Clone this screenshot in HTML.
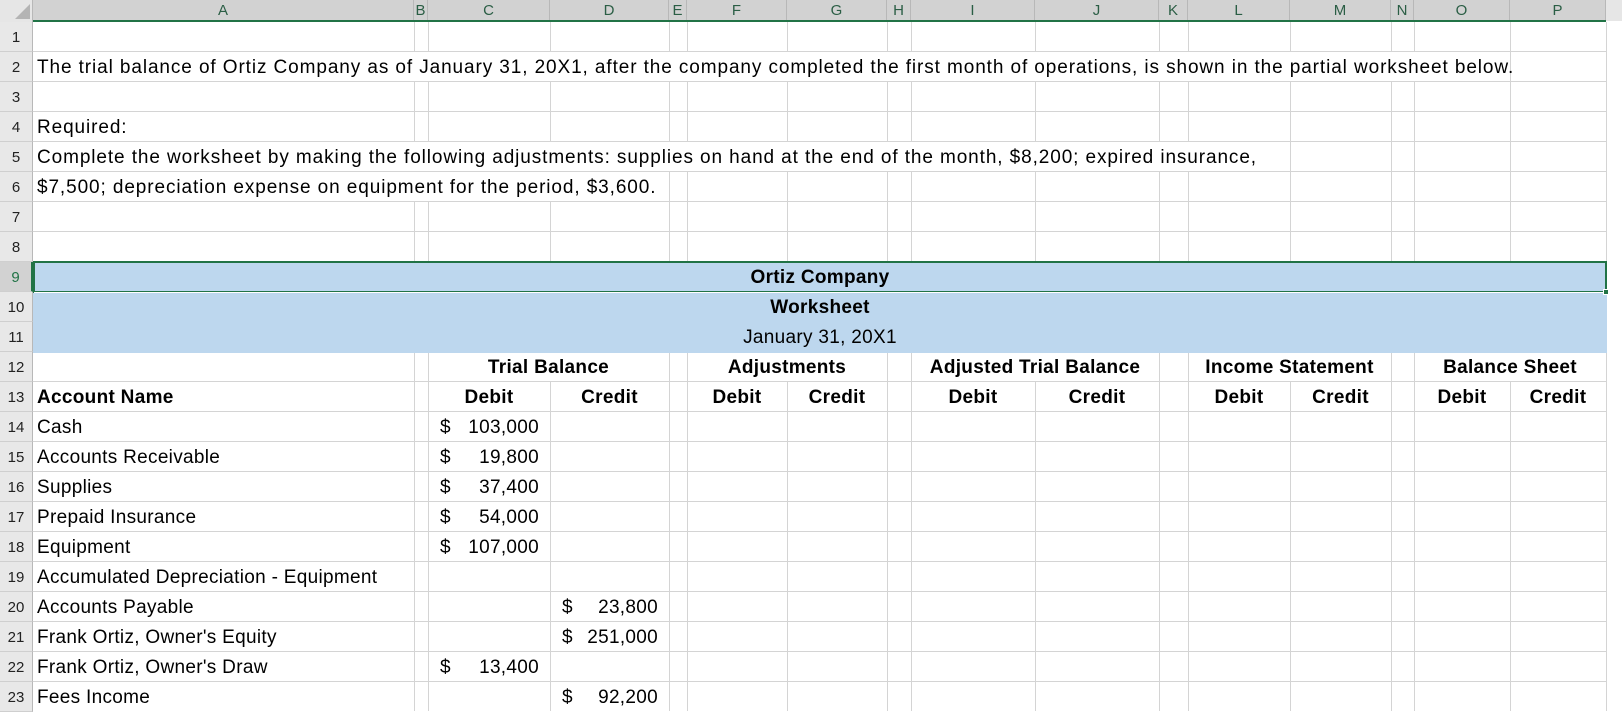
<!DOCTYPE html>
<html><head><meta charset="utf-8"><style>
*{margin:0;padding:0;box-sizing:border-box}
body{width:1622px;height:711px;overflow:hidden;background:#fff;position:relative;font-family:"Liberation Sans",Arial,sans-serif;font-size:19px;color:#000}
div{position:absolute}
.hl{left:33px;width:1574px;height:1px;background:#d4d4d4}
.vl{top:22px;width:1px;height:689px;background:#d4d4d4}
.ch{top:0;height:21px;background:#d2d2d2;color:#2b5e45;font-size:15px;line-height:21px;text-align:center;border-right:1px solid #b8b8b8}
.rh{left:0;width:33px;height:30px;background:#e8e8e8;border-bottom:1px solid #cfcfcf;border-right:1px solid #b8b8b8;font-size:15px;line-height:31px;text-align:center;color:#222}
.t{height:29px;line-height:31px;white-space:nowrap;letter-spacing:0.3px}
.p{letter-spacing:0.9px}
.w{background:#fff;height:29px}
.b{font-weight:bold}
.c{text-align:center}
.r{text-align:right}
</style></head><body>
<div style="left:0;top:0;width:33px;height:22px;background:#e6e6e6;border-right:1px solid #b8b8b8"></div>
<div style="left:15px;top:4px;width:0;height:0;border-left:15px solid transparent;border-bottom:15px solid #b4b4b4"></div>
<div class="ch" style="left:33px;width:381px">A</div>
<div class="ch" style="left:414px;width:14px">B</div>
<div class="ch" style="left:428px;width:122px">C</div>
<div class="ch" style="left:550px;width:119px">D</div>
<div class="ch" style="left:669px;width:18px">E</div>
<div class="ch" style="left:687px;width:100px">F</div>
<div class="ch" style="left:787px;width:100px">G</div>
<div class="ch" style="left:887px;width:24px">H</div>
<div class="ch" style="left:911px;width:124px">I</div>
<div class="ch" style="left:1035px;width:124px">J</div>
<div class="ch" style="left:1159px;width:29px">K</div>
<div class="ch" style="left:1188px;width:102px">L</div>
<div class="ch" style="left:1290px;width:101px">M</div>
<div class="ch" style="left:1391px;width:23px">N</div>
<div class="ch" style="left:1414px;width:96px">O</div>
<div class="ch" style="left:1510px;width:96px">P</div>
<div style="left:1606px;top:0;width:16px;height:21px;background:#e6e6e6"></div>
<div style="left:33px;top:20px;width:1573px;height:2px;background:#217346"></div>

<div class="hl" style="top:51px"></div><div class="hl" style="top:81px"></div><div class="hl" style="top:111px"></div><div class="hl" style="top:141px"></div><div class="hl" style="top:171px"></div><div class="hl" style="top:201px"></div><div class="hl" style="top:231px"></div><div class="hl" style="top:261px"></div><div class="hl" style="top:291px"></div><div class="hl" style="top:321px"></div><div class="hl" style="top:351px"></div><div class="hl" style="top:381px"></div><div class="hl" style="top:411px"></div><div class="hl" style="top:441px"></div><div class="hl" style="top:471px"></div><div class="hl" style="top:501px"></div><div class="hl" style="top:531px"></div><div class="hl" style="top:561px"></div><div class="hl" style="top:591px"></div><div class="hl" style="top:621px"></div><div class="hl" style="top:651px"></div><div class="hl" style="top:681px"></div>
<div class="vl" style="left:414px"></div><div class="vl" style="left:428px"></div><div class="vl" style="left:550px"></div><div class="vl" style="left:669px"></div><div class="vl" style="left:687px"></div><div class="vl" style="left:787px"></div><div class="vl" style="left:887px"></div><div class="vl" style="left:911px"></div><div class="vl" style="left:1035px"></div><div class="vl" style="left:1159px"></div><div class="vl" style="left:1188px"></div><div class="vl" style="left:1290px"></div><div class="vl" style="left:1391px"></div><div class="vl" style="left:1414px"></div><div class="vl" style="left:1510px"></div><div class="vl" style="left:1606px"></div>

<div class="w" style="left:34px;top:52px;width:1475px"></div>
<div class="w" style="left:34px;top:142px;width:1255px"></div>
<div class="w" style="left:34px;top:172px;width:634px"></div>
<div class="w" style="left:429px;top:352px;width:239px"></div>
<div class="w" style="left:688px;top:352px;width:198px"></div>
<div class="w" style="left:912px;top:352px;width:246px"></div>
<div class="w" style="left:1189px;top:352px;width:201px"></div>
<div class="w" style="left:1415px;top:352px;width:190px"></div>

<div style="left:33px;top:261px;width:1574px;height:92px;background:#bdd7ee"></div>
<div style="left:33px;top:261px;width:1574px;height:32px;border:2px solid #217346;"></div>
<div style="left:34px;top:292px;width:1572px;height:1px;background:#fff"></div>
<div style="left:1603px;top:289px;width:6px;height:6px;background:#217346;border:1px solid #fff"></div>
<div class="t b c" style="left:33px;width:1574px;top:262px">Ortiz Company</div>
<div class="t b c" style="left:33px;width:1574px;top:292px">Worksheet</div>
<div class="t c" style="left:33px;width:1574px;top:322px">January 31, 20X1</div>

<div class="rh" style="top:22px">1</div><div class="rh" style="top:52px">2</div><div class="rh" style="top:82px">3</div><div class="rh" style="top:112px">4</div><div class="rh" style="top:142px">5</div><div class="rh" style="top:172px">6</div><div class="rh" style="top:202px">7</div><div class="rh" style="top:232px">8</div>
<div class="rh" style="top:262px;background:#d2d2d2;color:#217346;border-right:2px solid #217346">9</div>
<div class="rh" style="top:292px">10</div><div class="rh" style="top:322px">11</div><div class="rh" style="top:352px">12</div><div class="rh" style="top:382px">13</div><div class="rh" style="top:412px">14</div><div class="rh" style="top:442px">15</div><div class="rh" style="top:472px">16</div><div class="rh" style="top:502px">17</div><div class="rh" style="top:532px">18</div><div class="rh" style="top:562px">19</div><div class="rh" style="top:592px">20</div><div class="rh" style="top:622px">21</div><div class="rh" style="top:652px">22</div><div class="rh" style="top:682px">23</div>

<div class="t p" style="left:37px;top:52px">The trial balance of Ortiz Company as of January 31, 20X1, after the company completed the first month of operations, is shown in the partial worksheet below.</div>
<div class="t p" style="left:37px;top:112px">Required:</div>
<div class="t p" style="left:37px;top:142px">Complete the worksheet by making the following adjustments: supplies on hand at the end of the month, $8,200; expired insurance,</div>
<div class="t p" style="left:37px;top:172px">$7,500; depreciation expense on equipment for the period, $3,600.</div>

<div class="t b c" style="left:428px;width:241px;top:352px">Trial Balance</div>
<div class="t b c" style="left:687px;width:200px;top:352px">Adjustments</div>
<div class="t b c" style="left:911px;width:248px;top:352px">Adjusted Trial Balance</div>
<div class="t b c" style="left:1188px;width:203px;top:352px">Income Statement</div>
<div class="t b c" style="left:1414px;width:192px;top:352px">Balance Sheet</div>

<div class="t b" style="left:37px;top:382px">Account Name</div>
<div class="t b c" style="left:428px;width:122px;top:382px">Debit</div>
<div class="t b c" style="left:550px;width:119px;top:382px">Credit</div>
<div class="t b c" style="left:687px;width:100px;top:382px">Debit</div>
<div class="t b c" style="left:787px;width:100px;top:382px">Credit</div>
<div class="t b c" style="left:911px;width:124px;top:382px">Debit</div>
<div class="t b c" style="left:1035px;width:124px;top:382px">Credit</div>
<div class="t b c" style="left:1188px;width:102px;top:382px">Debit</div>
<div class="t b c" style="left:1290px;width:101px;top:382px">Credit</div>
<div class="t b c" style="left:1414px;width:96px;top:382px">Debit</div>
<div class="t b c" style="left:1510px;width:96px;top:382px">Credit</div>

<div class="t" style="left:37px;top:412px">Cash</div>
<div class="t" style="left:37px;top:442px">Accounts Receivable</div>
<div class="t" style="left:37px;top:472px">Supplies</div>
<div class="t" style="left:37px;top:502px">Prepaid Insurance</div>
<div class="t" style="left:37px;top:532px">Equipment</div>
<div class="t" style="left:37px;top:562px">Accumulated Depreciation - Equipment</div>
<div class="t" style="left:37px;top:592px">Accounts Payable</div>
<div class="t" style="left:37px;top:622px">Frank Ortiz, Owner's Equity</div>
<div class="t" style="left:37px;top:652px">Frank Ortiz, Owner's Draw</div>
<div class="t" style="left:37px;top:682px">Fees Income</div>

<div class="t" style="left:440px;top:412px">$</div><div class="t r" style="left:440px;width:99px;top:412px">103,000</div>
<div class="t" style="left:440px;top:442px">$</div><div class="t r" style="left:440px;width:99px;top:442px">19,800</div>
<div class="t" style="left:440px;top:472px">$</div><div class="t r" style="left:440px;width:99px;top:472px">37,400</div>
<div class="t" style="left:440px;top:502px">$</div><div class="t r" style="left:440px;width:99px;top:502px">54,000</div>
<div class="t" style="left:440px;top:532px">$</div><div class="t r" style="left:440px;width:99px;top:532px">107,000</div>
<div class="t" style="left:440px;top:652px">$</div><div class="t r" style="left:440px;width:99px;top:652px">13,400</div>
<div class="t" style="left:562px;top:592px">$</div><div class="t r" style="left:562px;width:96px;top:592px">23,800</div>
<div class="t" style="left:562px;top:622px">$</div><div class="t r" style="left:562px;width:96px;top:622px">251,000</div>
<div class="t" style="left:562px;top:682px">$</div><div class="t r" style="left:562px;width:96px;top:682px">92,200</div>
</body></html>
